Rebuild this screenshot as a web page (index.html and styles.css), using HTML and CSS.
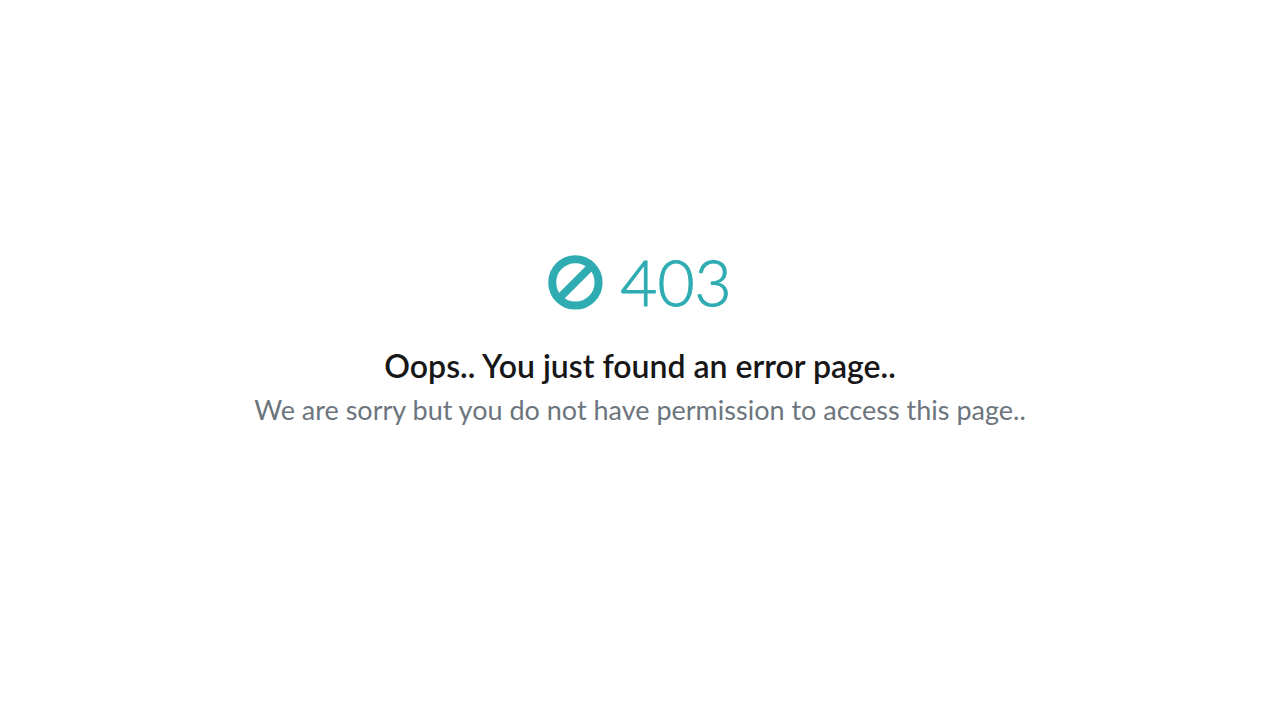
FILE: index.html
```html
<!DOCTYPE html>
<html lang="en">
<head>
<meta charset="utf-8">
<meta name="viewport" content="width=device-width, initial-scale=1">
<title>403</title>
<link rel="stylesheet" href="styles.css">
</head>
<body>
<main class="error-page">
  <h1 class="error-code">
    <svg class="error-icon" viewBox="0 0 56 56" aria-hidden="true">
      <circle cx="27.4" cy="28.4" r="23.2"/>
      <path d="M11 44.5L43.5 12"/>
    </svg>
    <span>403</span>
  </h1>
  <h2 class="error-title">Oops.. You just found an error page..</h2>
  <p class="error-text">We are sorry but you do not have permission to access this page..</p>
</main>
</body>
</html>
```
FILE: styles.css
```css
body {
  margin: 0;
  background: #fff;
  font-family: Lato, "Open Sans", sans-serif;
}

.error-page {
  box-sizing: border-box;
  min-height: 100vh;
  padding: 16px 16px 64px;
  display: flex;
  flex-direction: column;
  align-items: center;
  justify-content: center;
  text-align: center;
}

.error-code {
  display: flex;
  align-items: center;
  gap: 16px;
  margin: 0 0 24px;
  color: #2facb2;
  font-size: 64px;
  font-weight: 300;
  line-height: 80px;
  -webkit-text-stroke: 1px currentColor;
}

.error-icon {
  width: 56px;
  height: 56px;
  fill: none;
  stroke: currentColor;
  stroke-width: 8;
}

.error-title {
  margin: 0 0 4px;
  color: #171717;
  font-size: 32px;
  font-weight: 600;
  line-height: 40px;
}

.error-text {
  margin: 0;
  color: #6c757d;
  font-size: 27px;
  font-weight: 400;
  line-height: 40px;
}
```
